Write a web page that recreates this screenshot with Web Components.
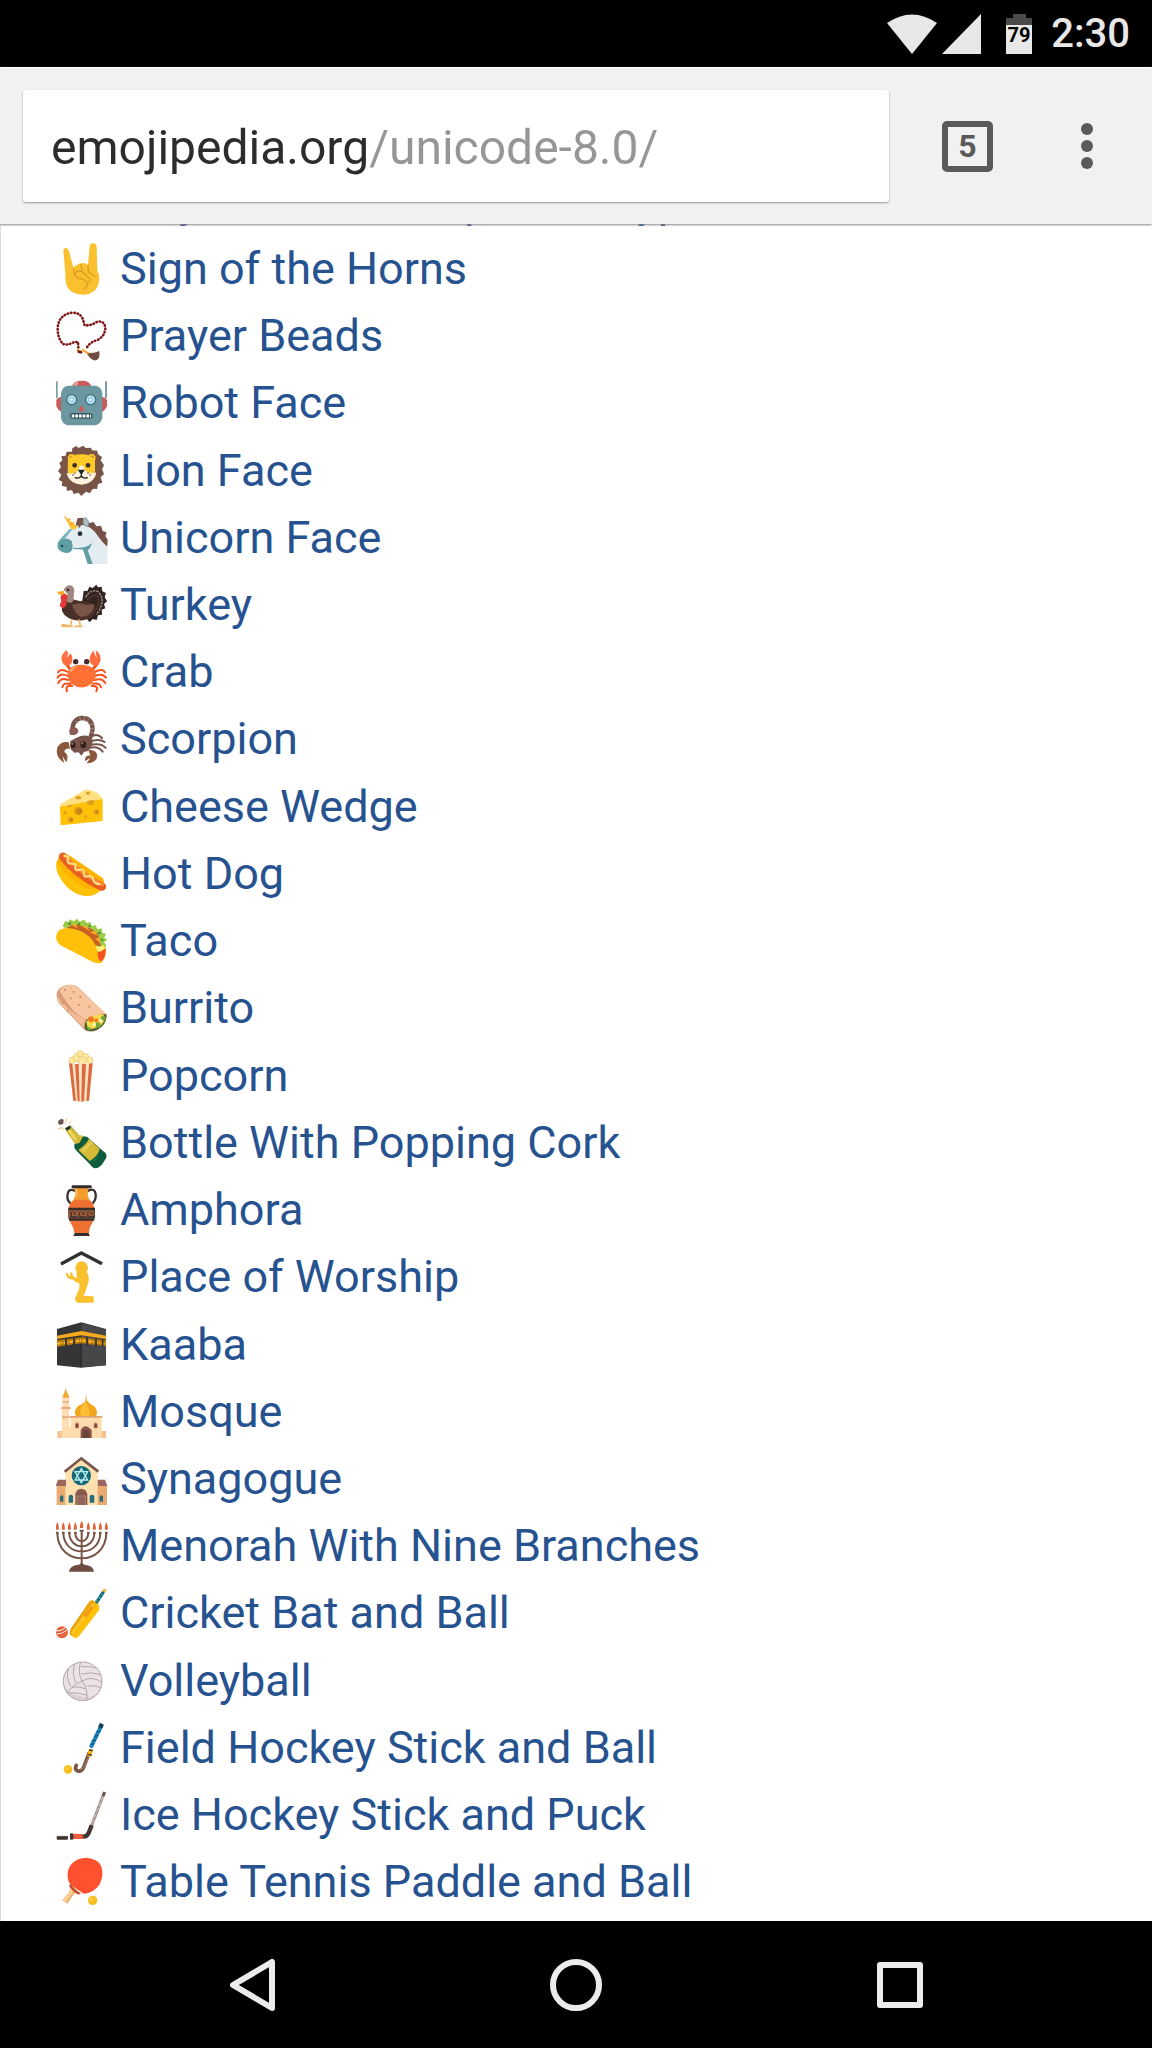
<!DOCTYPE html>
<html lang="en">
<head>
<meta charset="utf-8">
<meta name="viewport" content="width=device-width, initial-scale=1">
<title>Unicode 8.0</title>
<style>
  body {
    margin: 0;
    background: #fff;
    font-family: Roboto, "Noto Sans", sans-serif;
  }
</style>
</head>
<body>
<phone-screen>
  <status-bar slot="status" battery="79">2:30</status-bar>
  <browser-toolbar slot="toolbar" url="emojipedia.org/unicode-8.0/" tabs="5"></browser-toolbar>
  <emoji-list>
    <emoji-row icon="swatch">Emoji Modifier Fitzpatrick Type-6</emoji-row>
    <emoji-row icon="horns">Sign of the Horns</emoji-row>
    <emoji-row icon="beads">Prayer Beads</emoji-row>
    <emoji-row icon="robot">Robot Face</emoji-row>
    <emoji-row icon="lion">Lion Face</emoji-row>
    <emoji-row icon="unicorn">Unicorn Face</emoji-row>
    <emoji-row icon="turkey">Turkey</emoji-row>
    <emoji-row icon="crab">Crab</emoji-row>
    <emoji-row icon="scorpion">Scorpion</emoji-row>
    <emoji-row icon="cheese">Cheese Wedge</emoji-row>
    <emoji-row icon="hotdog">Hot Dog</emoji-row>
    <emoji-row icon="taco">Taco</emoji-row>
    <emoji-row icon="burrito">Burrito</emoji-row>
    <emoji-row icon="popcorn">Popcorn</emoji-row>
    <emoji-row icon="bottle">Bottle With Popping Cork</emoji-row>
    <emoji-row icon="amphora">Amphora</emoji-row>
    <emoji-row icon="worship">Place of Worship</emoji-row>
    <emoji-row icon="kaaba">Kaaba</emoji-row>
    <emoji-row icon="mosque">Mosque</emoji-row>
    <emoji-row icon="synagogue">Synagogue</emoji-row>
    <emoji-row icon="menorah">Menorah With Nine Branches</emoji-row>
    <emoji-row icon="cricket">Cricket Bat and Ball</emoji-row>
    <emoji-row icon="volleyball">Volleyball</emoji-row>
    <emoji-row icon="fieldhockey">Field Hockey Stick and Ball</emoji-row>
    <emoji-row icon="icehockey">Ice Hockey Stick and Puck</emoji-row>
    <emoji-row icon="tabletennis">Table Tennis Paddle and Ball</emoji-row>
  </emoji-list>
  <nav-bar slot="nav"></nav-bar>
</phone-screen>

<script>
(function() {
  // each icon: [top of its 156 unit square, markup, width in px if it is not 52]
  const ICONS = {
    swatch: [0, `<path fill="#5c4037" d="M100 50h56v56h-56z"/>`, 23],
    horns: [37, `
      <path fill="#fbc02d" d="M72 59Q72 51 80 52Q87 53 89 61L102 112Q107 101 115 103Q118 96 127 98Q138 94 146 104L151 47Q152 38 162 38Q172 39 172 49L174 121Q182 132 179 151Q174 191 130 192Q94 191 82 165Q77 151 78 130Z"/>
      <path fill="none" stroke="#d99a24" stroke-width="3.5" stroke-linecap="round" d="M102 112L105 132M124 102L128 120M146 104L147 124L166 136M104 130Q115 115 130 124L152 145Q155 153 146 157M108 132Q110 143 122 144Q138 146 143 158Q146 169 134 175"/>`],
    beads: [238, `
      <path fill="none" stroke="#e9a09a" stroke-width="3" d="M117 350L116 334L104 334Q86 345 71 340Q54 322 55 290Q60 250 99 246Q122 246 130 264L136 284Q155 286 174 273Q194 269 198 290Q198 315 175 328Q150 334 140 355"/>
      <path fill="none" stroke="#7b1714" stroke-width="8" stroke-linecap="round" stroke-dasharray="1 9" d="M117 350L116 334L104 334Q86 345 71 340Q54 322 55 290Q60 250 99 246Q122 246 130 264L136 284Q155 286 174 273Q194 269 198 290Q198 315 175 328Q150 334 140 355"/>
      <path fill="#6d4c41" d="M140 365Q160 370 180 361Q184 391 164 389Q151 385 140 365Z"/>
      <path stroke="#f9a825" stroke-width="6" d="M112 357L126 363M128 357L148 369"/>
      <path stroke="#7b1714" stroke-width="8" stroke-linecap="round" d="M118 363L125 365"/>`],
    robot: [440, `
      <path fill="#78a0a8" d="M49 453h6v50h-6zM197 453h6v50h-6z"/>
      <path fill="#c95b5b" d="M51 508Q60 496 72 502V546Q60 546 51 528ZM203 508Q194 496 182 502V546Q194 546 203 528ZM98 468Q101 451 127 451Q152 451 156 468Z"/>
      <path fill="#ef9a9a" d="M104 458Q110 452 117 453L114 466H102Z"/>
      <path fill="#6b98a0" d="M84 466H170Q187 470 189 490V563Q184 581 169 585H84Q69 580 65 563V490Q68 470 84 466Z"/>
      <circle cx="97" cy="508" r="17" fill="#456f78"/><circle cx="154" cy="508" r="17" fill="#456f78"/>
      <circle cx="97" cy="508" r="13" fill="#b3e5fc"/><circle cx="154" cy="508" r="13" fill="#b3e5fc"/>
      <circle cx="97" cy="508" r="6" fill="#e9faff" stroke="#63a2b5" stroke-width="2"/><circle cx="154" cy="508" r="6" fill="#e9faff" stroke="#63a2b5" stroke-width="2"/>
      <path fill="#d65656" d="M126 524L134 540Q126 547 118 540Z"/>
      <rect x="91" y="548" width="69" height="17" rx="8" fill="#37565e"/>
      <path stroke="#fff" stroke-width="9" stroke-dasharray="8 3" d="M97 557h58"/>`],
    lion: [41, `
      <path fill="#795548" d="M99 51L111 44L117 50L132 43L139 50L155 49L158 57L174 58L176 69L188 77L184 87L194 102L188 113L194 128L184 138L189 154L176 158L173 173L161 172L151 186L140 181L126 194L117 184L103 188L98 177L82 178L82 167L67 163L69 151L58 145L66 131L56 119L65 107L60 95L69 87L66 75L79 73L82 61L98 61Z"/>
      <circle cx="97" cy="80" r="12" fill="#fbc02d"/><circle cx="157" cy="80" r="12" fill="#fbc02d"/>
      <circle cx="96" cy="81" r="6" fill="#5d4037"/><circle cx="157" cy="81" r="6" fill="#5d4037"/>
      <path fill="#ffca28" d="M86 83Q98 69 126 69Q154 69 167 83V119Q165 133 154 144L127 161L99 144Q87 133 85 119Z"/>
      <path fill="#fff3e0" d="M82 124Q100 132 115 118L122 103H131L139 118Q153 131 170 123Q171 139 152 153Q127 166 101 153Q83 139 82 124Z"/>
      <circle cx="106" cy="102" r="7" fill="#3e2f2b"/><circle cx="146" cy="102" r="7" fill="#3e2f2b"/>
      <path fill="#222" d="M115 115H137L128 128V138H124V128Z"/>
      <path fill="none" stroke="#222" stroke-width="4" stroke-linecap="round" d="M108 139Q118 143 126 135Q134 143 144 139"/>
      <path fill="#795548" d="M105 123h4v4h-4zM99 129h4v4h-4zM144 123h4v4h-4zM150 129h4v4h-4z"/>`],
    unicorn: [243, `
      <path fill="#795048" d="M115 262L130 260L139 272L150 276L163 273L171 286L185 284L190 300L202 304L198 315L205 326L204 345L190 348L177 330L146 290L116 287L104 298Z"/>
      <path fill="#e3edf1" d="M96 291Q113 279 136 283Q162 291 176 316Q190 336 204 347V399H155Q153 374 134 356Q110 352 96 361L62 331Z"/>
      <path fill="#5f9fa4" d="M62 327Q81 317 97 330Q104 352 94 362Q76 372 58 356Q52 345 56 334ZM102 350Q139 354 158 336Q154 352 145 358L160 399H145L131 356Q116 353 102 354Z"/>
      <path fill="#78b3b9" d="M59 328L91 294L99 294L75 325Z"/>
      <path fill="#fbc02d" d="M72 251L114 287Q106 301 94 292Z"/>
      <path stroke="#e69b18" stroke-width="3" d="M83 269L94 263M90 282L105 273"/>
      <path fill="#b0bec5" stroke="#78909c" stroke-width="3" d="M132 280Q129 264 137 260Q153 269 146 287Z"/>
      <path fill="#795548" d="M112 267L123 260L129 278L119 292Z"/>
      <circle cx="122" cy="308" r="7" fill="#263238"/>
      <circle cx="68" cy="345" r="4" fill="#244e56"/>`],
    turkey: [445, `
      <path fill="#33231f" d="M130 503L133 481L145 480L150 468L160 472L171 462L176 470L187 468L189 482L200 487L196 499L203 512L194 520L198 533L187 537L188 552L176 554L172 568L160 565L151 575L140 562L119 556Z"/>
      <path fill="none" stroke="#a89a94" stroke-width="4" stroke-dasharray="7 3" d="M139 500Q151 476 175 482Q203 507 171 552"/>
      <path fill="none" stroke="#5d4037" stroke-width="5" stroke-dasharray="5 3" d="M144 508Q162 489 175 498Q184 517 166 542"/>
      <path fill="#493029" d="M82 499Q97 507 121 511Q158 511 170 532Q168 568 119 570Q79 567 68 541Q66 527 77 511Z"/>
      <path fill="#795548" d="M98 523Q119 514 139 522L165 521Q160 559 124 558Q106 550 98 523Z"/>
      <path fill="#a1887f" d="M73 477Q82 459 98 465Q108 473 104 487L102 510Q94 523 80 510L85 491Z"/>
      <path fill="#e53935" d="M67 491Q79 484 85 496Q84 503 81 511Q85 525 72 532Q59 530 62 519Q69 511 63 502Z"/>
      <path fill="#f9a825" d="M53 483L74 481L76 491L59 492Z"/>
      <circle cx="86" cy="478" r="4" fill="#3e2723"/>
      <path fill="none" stroke="#efb76b" stroke-width="5" stroke-linecap="round" d="M97 568L94 585M119 568L123 585M68 587H99M107 587H128M68 582L88 585"/>`],
    crab: [31, `
      <path fill="none" stroke="#f4511e" stroke-width="6" stroke-linecap="round" d="M86 109Q63 96 56 110M86 121Q63 110 55 126M86 133Q65 124 57 142M94 144Q70 140 69 155M98 151Q76 148 83 167M166 109Q191 97 197 110M166 121Q189 111 200 126M166 133Q188 125 198 142M160 144Q182 140 185 155M157 151Q179 149 171 167"/>
      <path fill="none" stroke="#f4511e" stroke-width="9" d="M79 83L96 105M175 83L157 105"/>
      <path fill="#ff6e40" d="M80 44L87 51L82 67L94 53Q105 72 94 86Q82 95 72 85Q62 70 70 56ZM162 45L172 68L169 44Q182 51 184 69Q183 86 171 90Q158 91 151 78Q148 62 162 45Z"/>
      <path fill="#ff7034" d="M88 104Q94 89 126 87Q158 89 167 104Q177 123 156 145Q126 166 97 145Q79 126 88 104Z"/>
      <path fill="#ffab75" d="M91 103Q97 92 113 93Q98 101 94 112Z"/>
      <circle cx="109" cy="78" r="8" fill="#3e2d2a"/><circle cx="142" cy="78" r="8" fill="#3e2d2a"/>`],
    scorpion: [233, `
      <path fill="none" stroke="#76544b" stroke-width="13" stroke-linecap="round" d="M99 284Q100 252 126 248Q158 247 160 280Q157 303 147 314"/>
      <path fill="none" stroke="#bfa59b" stroke-width="2" d="M107 257L120 263M120 244L125 257M136 243L132 257M150 250L141 261M165 266L147 268M166 279L151 280M164 292L148 291M159 305L144 303"/>
      <path fill="#8d5b51" d="M92 298Q85 280 99 276Q116 274 117 289Q110 303 92 298Z"/>
      <path fill="none" stroke="#76544b" stroke-width="6" stroke-linecap="round" d="M148 310Q171 289 188 308M148 320Q179 308 196 320M149 329Q187 321 199 338M149 338Q176 331 190 349"/>
      <path fill="#76544b" d="M93 317Q112 306 124 302Q151 296 160 315Q159 338 146 347L134 350L126 361L118 351L105 352L94 342Z"/>
      <path fill="#8b563b" d="M88 321Q67 316 55 334Q48 354 59 369Q66 377 75 383L69 362L81 381Q90 358 75 350Q76 337 92 340ZM147 344Q172 341 174 362Q172 383 142 384L153 368L137 377Q135 361 153 360Z"/>
      <ellipse cx="101" cy="329" rx="8" ry="10" fill="#38211d"/><ellipse cx="132" cy="328" rx="9" ry="10" fill="#38211d"/>
      <circle cx="99" cy="325" r="3" fill="#a1887f"/><circle cx="129" cy="324" r="3" fill="#a1887f"/>`],
    cheese: [434, `
      <path fill="#ffe082" d="M63 504L139 459Q180 464 190 490L63 513Z"/>
      <path fill="#ffc107" d="M62 511L190 488V554L64 567Z"/>
      <g fill="#dea022"><ellipse cx="117" cy="484" rx="9" ry="5"/><ellipse cx="146" cy="471" rx="7" ry="4"/><path d="M85 507L98 505Q96 514 88 513ZM141 498Q154 487 166 493Q164 507 151 507Q143 505 141 498Z"/><circle cx="117" cy="524" r="13"/><circle cx="171" cy="527" r="8"/><circle cx="139" cy="541" r="5"/><circle cx="94" cy="550" r="8"/><circle cx="77" cy="529" r="5"/></g>
      <g fill="#c98512"><circle cx="120" cy="525" r="9"/><circle cx="173" cy="528" r="5"/><circle cx="96" cy="551" r="5"/></g>`],
    hotdog: [21, `
      <path fill="#ffb300" d="M61 43Q77 32 94 46L190 111Q202 130 183 148Q165 169 133 164Q82 155 54 92Q49 73 53 61Z"/>
      <path fill="#ffc107" d="M52 62Q76 105 121 132Q154 150 184 145Q169 167 139 163Q84 156 55 97Q49 80 52 62Z"/>
      <path fill="none" stroke="#e95f22" stroke-width="25" stroke-linecap="round" d="M71 47Q112 101 188 137"/>
      <path fill="none" stroke="#ff8a3c" stroke-width="9" stroke-linecap="round" d="M76 44Q124 98 190 131"/>
      <path fill="none" stroke="#ffe082" stroke-width="6" stroke-linecap="round" stroke-linejoin="round" d="M75 44Q93 45 85 57Q82 71 101 68Q114 67 107 81Q108 91 121 86Q138 84 133 99Q134 111 149 105Q164 107 161 116Q165 129 181 130"/>`],
    taco: [223, `
      <path fill="#9ccc47" d="M70 257L77 241L88 244L91 236L104 242L112 234L121 243L134 237L143 247L153 244L157 257L169 253L174 266L187 263L189 276L200 279L195 291L204 297L194 305L201 313L192 324L168 332Z"/>
      <g fill="#4f8f28"><circle cx="91" cy="249" r="4"/><circle cx="119" cy="250" r="4"/><circle cx="151" cy="256" r="4"/><circle cx="180" cy="277" r="4"/><circle cx="188" cy="298" r="4"/></g>
      <path fill="#c76024" d="M83 261Q103 247 126 256Q160 260 176 281L185 318L160 311Q136 277 83 261Z"/>
      <path fill="#ffa726" d="M98 254L109 248L115 263ZM129 257L143 256L151 272ZM151 275L166 270L175 285ZM167 294L180 291L184 308Z"/>
      <path fill="#efa91c" d="M173 324L199 317Q204 349 187 364L164 365Z"/>
      <path fill="#f4511e" d="M175 329L198 324Q200 347 188 360L175 362Z"/>
      <path fill="#fff176" d="M168 316L180 318L192 314L198 323L183 333L170 332Z"/>
      <path fill="#ffbf0a" d="M50 288Q53 263 81 262Q123 263 151 289Q173 310 174 342Q177 361 190 364Q180 372 159 363L69 317Q51 307 50 288Z"/>`],
    burrito: [424, `
      <path fill="#d99b78" d="M52 468Q50 448 67 439Q91 427 113 437L203 523Q201 552 174 568Q153 577 136 568L58 487Z"/>
      <path fill="#f7c6a1" d="M60 449Q76 431 99 433Q111 434 119 442L199 519Q172 520 144 535Q124 529 109 517Q85 493 60 449Z"/>
      <path fill="#f4bc94" d="M54 468Q74 494 106 519Q121 529 138 533L135 563L60 487Q50 478 54 468Z"/>
      <path fill="#526535" d="M136 549Q146 526 174 525L201 520Q204 552 174 567Q148 577 136 565Z"/>
      <path fill="#f4dd4b" d="M141 543Q162 517 192 522Q203 534 187 552Q167 566 146 565Z"/>
      <g fill="#74a833"><circle cx="176" cy="553" r="8"/><circle cx="191" cy="533" r="7"/><circle cx="149" cy="564" r="5"/></g>
      <g fill="#ef7b22"><circle cx="155" cy="536" r="9"/><circle cx="171" cy="539" r="6"/></g>
      <g fill="#fff9c4"><circle cx="165" cy="552" r="5"/><circle cx="184" cy="540" r="5"/></g>
      <g fill="#c88a66"><circle cx="77" cy="448" r="3"/><circle cx="103" cy="454" r="3"/><circle cx="94" cy="473" r="3"/><circle cx="123" cy="469" r="3"/><circle cx="119" cy="492" r="3"/><circle cx="150" cy="498" r="3"/><circle cx="96" cy="442" r="2"/><circle cx="85" cy="511" r="3"/><circle cx="70" cy="486" r="3"/></g>`],
    popcorn: [11, `
      <g fill="#ffe9a0" stroke="#dfc16a" stroke-width="2"><circle cx="99" cy="42" r="10"/><circle cx="113" cy="34" r="12"/><circle cx="123" cy="23" r="10"/><circle cx="137" cy="32" r="11"/><circle cx="151" cy="42" r="10"/><circle cx="129" cy="43" r="12"/></g>
      <path fill="#ffe4c4" d="M89 50L106 54L123 51L143 54L160 50L149 163L125 166L102 163Z"/>
      <path fill="#dc6a3e" d="M89 50L99 53L110 164L102 163ZM107 54L118 52L121 165L115 165ZM128 52L140 54L134 165L126 166ZM149 53L160 50L149 163L141 164Z"/>`],
    bottle: [212, `
      <path fill="#6d5450" d="M57 224L65 217L73 220L72 232L62 236L56 231Z"/>
      <path stroke="#f5c05b" stroke-width="3" d="M82 216L79 227M88 231L95 225M57 247L67 244M70 251L76 244"/>
      <path stroke="#b0bec5" stroke-width="2" d="M78 235L74 228M63 249L71 240"/>
      <path fill="#0e5c3b" d="M79 248L93 237L119 268L143 271L192 315Q204 322 201 334L189 353Q178 368 164 365Q157 362 151 353L110 312Q101 301 107 291Z"/>
      <path fill="#d5b938" d="M80 251L94 240L119 266L132 269L120 290L108 293L82 258ZM117 311Q141 294 149 277L181 307Q178 328 151 344Z"/>
      <path fill="#ead55c" d="M85 253L91 248L113 276L108 286Z"/>
      <path fill="#20352a" d="M77 246L90 238L95 245L83 254Z"/>
      <path fill="#e3cb56" d="M127 312L154 285L159 290L134 319Z"/>
      <path fill="#146b46" d="M154 345L178 326L183 328L162 350Z"/>`],
    amphora: [414, `
      <path fill="none" stroke="#373331" stroke-width="7" stroke-linecap="round" d="M106 434Q88 426 85 444Q81 461 94 473M147 434Q166 425 169 444Q171 461 159 473"/>
      <path fill="#f59c2e" d="M105 425H147L145 448Q148 461 162 474L90 474Q105 462 108 448Z"/>
      <path fill="#ef7132" d="M106 461H148Q168 473 166 500Q163 528 152 543L148 565H106L101 543Q87 523 86 499Q86 472 106 461Z"/>
      <rect x="97" y="418" width="60" height="9" rx="3" fill="#332d2b"/>
      <path fill="#332d2b" d="M87 485H167V492H87ZM88 517H165V524H89ZM107 561H147L152 571H101Z"/>
      <path fill="#4b3832" d="M87 491H167V517H87Z"/>
      <path fill="none" stroke="#c26b3a" stroke-width="3" d="M90 514V495H112V508H99V501H106M116 514V495H137V508H124V501H131M141 514V495H162V508H149V501H156"/>
      <path stroke="#ffbd62" stroke-width="6" d="M111 428V450"/>`],
    worship: [16, `
      <path fill="none" stroke="#303030" stroke-width="10" stroke-linejoin="round" d="M65 55L126 22L188 54"/>
      <circle cx="127" cy="66" r="19" fill="#fbc02d"/>
      <path fill="#fbc02d" d="M112 80Q125 70 143 80Q151 91 147 110L136 144Q131 149 134 151L162 152Q165 157 162 171H114Q104 166 109 153L120 128V113Q106 110 100 101Q85 103 80 89Q78 79 84 82L92 94L93 80Q100 79 101 90L112 99Z"/>`],
    kaaba: [217, `
      <path fill="#343536" d="M53 247L126 227L200 247V356L125 363L53 356Z"/>
      <path fill="#454748" d="M126 229L200 249V356L126 362Z"/>
      <path fill="#f6a91b" d="M53 267L126 253L200 267V277L126 266L53 277Z"/>
      <path fill="#b8790a" d="M53 281L126 272L200 281V299L126 290L53 300Z"/>
      <path fill="none" stroke="#ffc232" stroke-width="6" stroke-dasharray="9 3 3 4" d="M54 291L126 281L199 291"/>
      <path stroke="#292b2d" stroke-width="5" d="M80 277V299M104 272V297M143 272V296M170 275V299M190 278V299"/>
      <path stroke="#242629" stroke-width="3" d="M126 292V361"/>`],
    mosque: [419, `
      <path fill="#d6b383" d="M79 424L82 435L90 454H69L76 435Z"/>
      <path fill="#f3a82e" d="M79 431L91 454H69Z"/>
      <path fill="#ffdcb4" d="M70 454H89V484H93V492H89V552H68V492H65V484H70Z"/>
      <path fill="#e8aa7b" d="M66 481H93V488H66ZM69 465H89V469H69ZM68 510H90V515H68Z"/>
      <path fill="#f4c390" d="M54 554H75V576H54ZM179 554H200V576H179Z"/>
      <path fill="#ffdcae" d="M94 511H187V576H68V542H94Z"/>
      <path fill="#f1a51c" d="M140 443L143 463Q150 472 164 479Q178 493 170 510H110Q101 493 117 478Q136 471 138 463Z"/>
      <path fill="#ffbe38" d="M139 464Q143 477 150 491L150 509H126Q117 493 130 478Z"/>
      <path fill="#e1a16f" d="M91 509H189V514H91Z"/>
      <path fill="#8b554b" d="M124 576V551Q137 528 157 551V576Z"/>
      <path fill="#6a453e" d="M130 576V555Q139 544 150 555V576Z"/>
      <path fill="#be7965" d="M107 546V533Q113 523 119 533V546ZM163 546V533Q169 523 175 533V546Z"/>
      <path fill="#704139" d="M110 543V534H116V543ZM166 543V534H172V543Z"/>`],
    synagogue: [20, `
      <path fill="#ebaa70" d="M52 119H203V177H52Z"/>
      <path fill="#ffe0ae" d="M126 35L175 74V177H78V74Z"/>
      <path fill="none" stroke="#79554b" stroke-width="8" d="M76 76L126 36L177 76"/>
      <path fill="#9b665b" d="M56 100H80V119H49ZM175 100H197L204 119H175Z"/>
      <circle cx="126" cy="88" r="29" fill="#176878"/>
      <path fill="none" stroke="#b7eeee" stroke-width="4" d="M126 67L145 101H107ZM126 109L107 76H145Z"/>
      <path fill="#87594d" d="M108 177V143Q112 128 126 127Q140 128 144 143V177Z"/>
      <path fill="#c38b79" d="M112 177V148H140V177Z"/>
      <path fill="#91655c" d="M114 177V150H138V177Z"/>
      <path fill="#296d7a" d="M62 166V150Q67 144 72 150V166ZM88 169V149Q95 141 101 149V169ZM151 169V149Q158 141 165 149V169ZM181 166V150Q186 144 191 150V166Z"/>`],
    menorah: [222, `
      <path fill="none" stroke="#795548" stroke-width="6" d="M54 261C55 362 199 362 201 261M72 261C73 335 182 335 183 261M90 261C91 314 164 314 165 261M108 261C108 294 146 294 147 261M127 255V364"/>
      <path stroke="#795548" stroke-width="6" d="M50 260H58M68 260H76M86 260H94M104 260H112M121 254H133M143 260H151M161 260H169M179 260H187M197 260H205"/>
      <path fill="#6d4c41" d="M89 377Q92 357 119 356L127 350L135 356Q162 358 164 377Z"/>
      <path fill="#df6338" d="M54 229Q60 240 58 251H50Q48 240 54 229ZM72 229Q78 240 76 251H68Q66 240 72 229ZM90 229Q96 240 94 251H86Q84 240 90 229ZM108 229Q114 240 112 251H104Q102 240 108 229ZM127 224Q134 236 131 246H122Q120 235 127 224ZM147 229Q153 240 151 251H143Q141 240 147 229ZM165 229Q171 240 169 251H161Q159 240 165 229ZM183 229Q189 240 187 251H179Q177 240 183 229ZM201 229Q207 240 205 251H197Q195 240 201 229Z"/>`],
    cricket: [424, `
      <path stroke="#166779" stroke-width="10" d="M169 474L193 438"/>
      <path stroke="#52b5c0" stroke-width="3" d="M169 464L178 469M176 454L185 459M184 444L192 449"/>
      <path stroke="#f3b831" stroke-width="10" d="M193 438L198 431"/>
      <path fill="#ffc107" d="M151 467L160 463L179 479L180 492L117 574Q110 579 102 575L91 565Q89 558 96 547Z"/>
      <path fill="#e9a613" d="M151 467L160 463L170 475L98 571L91 565Q89 558 96 547Z"/>
      <path fill="#ffc928" d="M160 472L167 478L100 567L95 562Z"/>
      <path fill="#f49b15" d="M154 483L166 482L143 515Q135 513 133 508Z"/>
      <circle cx="68" cy="560" r="18" fill="#e9653f"/>
      <path fill="none" stroke="#fff0e5" stroke-width="3" d="M50 556Q65 558 80 545M52 565Q70 565 84 552"/>
      <path fill="none" stroke="#963f31" stroke-width="2" stroke-dasharray="3 3" d="M51 561Q67 563 82 549"/>`],
    volleyball: [25, `
      <circle cx="130" cy="104" r="59" fill="#eae2e4"/>
      <path fill="#dcd2d5" d="M73 119Q86 161 130 163Q171 159 186 119Q179 150 139 151Q102 153 73 119Z"/>
      <g fill="none" stroke="#b3a8ab" stroke-width="3"><circle cx="130" cy="104" r="58"/><path d="M128 103Q114 76 124 46M128 103Q159 86 188 107M128 103Q97 117 83 139M110 110Q96 77 107 50M94 119Q78 89 88 64M124 60Q150 58 172 64M126 82Q157 74 183 84M143 118Q165 114 186 123M128 103Q147 128 142 161M84 139Q112 136 142 145M98 122Q120 118 138 126"/></g>`],
    fieldhockey: [227, `
      <path stroke="#1686b8" stroke-width="12" d="M154 304L186 238"/>
      <path stroke="#0d4f80" stroke-width="3" d="M152 294L165 293M157 283L170 282M164 270L176 268M171 256L184 254"/>
      <path stroke="#183f58" stroke-width="13" d="M182 244L188 232"/>
      <path fill="none" stroke="#795548" stroke-width="11" stroke-linecap="round" d="M149 321L133 363Q127 377 115 374Q105 369 111 357"/>
      <path fill="none" stroke="#a77a5f" stroke-width="4" d="M151 326L138 356Q131 369 121 369"/>
      <path stroke="#ffb300" stroke-width="12" d="M148 330L156 309"/>
      <path stroke="#3e3a35" stroke-width="4" d="M144 324L158 326M149 311L161 313"/>
      <circle cx="86" cy="369" r="13" fill="#f7bc1f"/>
      <circle cx="83" cy="366" r="6" fill="#ffce37"/>`],
    icehockey: [428, `
      <path stroke="#a49796" stroke-width="9" d="M156 540L194 441"/>
      <path stroke="#d8cccc" stroke-width="3" d="M159 531L190 452"/>
      <path stroke="#6b5757" stroke-width="9" d="M191 449L196 437"/>
      <path stroke="#876766" stroke-width="2" d="M161 520L169 511M167 504L176 494M174 487L181 479M180 470L187 462"/>
      <path fill="none" stroke="#443633" stroke-width="13" stroke-linejoin="round" d="M157 537L148 560Q142 572 132 571H92"/>
      <path fill="#ef5c3e" d="M102 562L128 563L133 578H103Z"/>
      <path fill="#443633" d="M92 561H101V580H92Z"/>
      <rect x="52" y="569" width="34" height="11" rx="3" fill="#3d3431"/>
      <path stroke="#756964" stroke-width="2" d="M54 570H84"/>`],
    tabletennis: [630, `
      <path fill="#eab476" d="M96 717L115 735L101 748L84 773L69 762L87 742Z"/>
      <path fill="#ffd395" d="M94 723L104 733L79 768L72 762L89 742Z"/>
      <path fill="#ff5130" d="M94 657Q111 635 143 635Q174 638 185 659Q196 686 180 716Q163 741 133 743L97 719Q84 708 85 688Q84 671 94 657Z"/>
      <path fill="#bb4d2d" d="M94 714Q101 729 125 742L117 746Q98 735 89 719Z"/>
      <circle cx="160" cy="763" r="14" fill="#f7bd20"/><circle cx="156" cy="760" r="7" fill="#ffce3c"/>`]
  };

  function attach(el, html) {
    const root = el.attachShadow({ mode: 'open' });
    const tmpl = document.createElement('template');
    tmpl.innerHTML = html;
    root.appendChild(tmpl.content.cloneNode(true));
    return root;
  }

  class PhoneScreen extends HTMLElement {
    constructor() {
      super();
      attach(this, `
        <style>
          :host {
            display: flex;
            flex-direction: column;
            min-height: 100vh;
          }
          main {
            flex: 1;
            display: flex;
            flex-direction: column;
            border-left: 1px solid #dcdcdc;
          }
        </style>
        <slot name="status"></slot>
        <slot name="toolbar"></slot>
        <main><slot></slot></main>
        <slot name="nav"></slot>
      `);
    }
  }

  class StatusBar extends HTMLElement {
    connectedCallback() {
      attach(this, `
        <style>
          :host {
            display: flex;
            align-items: center;
            justify-content: flex-end;
            height: 67px;
            padding-right: 22px;
            background: #000;
            color: #e8e8e8;
            font-size: 40px;
            font-weight: 500;
            line-height: 48px;
          }
          svg {
            display: block;
            fill: #e8e8e8;
          }
          .signal { margin-left: 5px; }
          .battery { margin: 0 19px 0 24px; }
          text {
            fill: #000;
            font-size: 20px;
            font-weight: 700;
          }
        </style>
        <svg width="50" height="40" viewBox="0 0 50 40"><path d="M0 9Q25 -8 50 9L25 40Z"/></svg>
        <svg class="signal" width="40" height="40" viewBox="0 0 40 40"><path d="M39 0V40H0Z"/></svg>
        <svg class="battery" width="26" height="40" viewBox="0 0 26 40">
          <path fill="#4a4a4a" d="M7 0H20V4H26V11H0V4H7Z"/>
          <path d="M0 11H26V40H0Z"/>
          <text x="13" y="28" text-anchor="middle">${this.getAttribute('battery')}</text>
        </svg>
        <slot></slot>
      `);
    }
  }

  class BrowserToolbar extends HTMLElement {
    connectedCallback() {
      attach(this, `
        <style>
          :host {
            position: relative;
            z-index: 1;
            display: flex;
            align-items: center;
            box-sizing: border-box;
            height: 157px;
            padding: 0 33px 0 23px;
            background: #f1f1f1;
            border-top: 1px solid #fff;
            box-shadow: 0 1px 2px #888;
          }
          .box {
            flex: 1;
            display: flex;
            background: #fff;
            border-radius: 3px;
            box-shadow: 0 1px 2px #999;
          }
          input {
            flex: 1;
            min-width: 0;
            height: 112px;
            box-sizing: border-box;
            border: 0;
            padding: 2px 28px 0;
            outline: 0;
            font-family: inherit;
            font-size: 48px;
            color: #2c2c2c;
            -webkit-text-fill-color: transparent;
            background: linear-gradient(90deg, #2c2c2c 347px, #969696 347px);
            -webkit-background-clip: text;
            background-clip: text;
          }
          button {
            display: grid;
            place-items: center;
            border: 0;
            padding: 0;
            background: none;
            color: #5a5a5a;
            font-family: inherit;
          }
          .tabs {
            box-sizing: border-box;
            width: 51px;
            height: 51px;
            margin: 0 62px 0 53px;
            border: 6px solid #5a5a5a;
            border-radius: 5px;
            font-size: 32px;
            font-weight: 700;
            line-height: 39px;
          }
          .menu {
            width: 64px;
            height: 64px;
          }
          .menu svg { fill: #5a5a5a; }
        </style>
        <div class="box"><input type="text" aria-label="Address" value="${this.getAttribute('url')}"></div>
        <button class="tabs" aria-label="Tabs">${this.getAttribute('tabs')}</button>
        <button class="menu" aria-label="Menu">
          <svg width="12" height="46" viewBox="0 0 12 46"><circle cx="6" cy="6" r="6"/><circle cx="6" cy="23" r="6"/><circle cx="6" cy="40" r="6"/></svg>
        </button>
      `);
    }
  }

  class EmojiList extends HTMLElement {
    constructor() {
      super();
      attach(this, `
        <style>
          /* scrolled up so that the first row is under the toolbar */
          :host {
            flex: 1;
            display: grid;
            grid-auto-rows: minmax(67px, 1fr);
            margin-top: -56px;
            padding: 0 55px 5px;
          }
        </style>
        <slot></slot>
      `);
    }

    connectedCallback() {
      this.setAttribute('role', 'list');
    }
  }

  class EmojiRow extends HTMLElement {
    connectedCallback() {
      const [top, art, width = 52] = ICONS[this.getAttribute('icon')];
      this.setAttribute('role', 'listitem');
      attach(this, `
        <style>
          :host {
            display: flex;
            align-items: center;
            font-size: 45px;
            line-height: 56px;
          }
          a {
            display: flex;
            align-items: center;
            gap: 12px;
            color: #26528f;
            text-decoration: none;
          }
          svg {
            flex: none;
            display: block;
          }
        </style>
        <a href="#${this.getAttribute('icon')}">
          <svg width="${width}" height="52" viewBox="50 ${top} 156 156" aria-hidden="true">${art}</svg>
          <span><slot></slot></span>
        </a>
      `);
    }
  }

  class NavBar extends HTMLElement {
    constructor() {
      super();
      attach(this, `
        <style>
          :host {
            display: grid;
            grid-template-columns: repeat(3, 1fr);
            height: 127px;
            padding: 0 90px;
            background: #000;
          }
          button {
            border: 0;
            padding: 0;
            background: none;
          }
          svg {
            display: block;
            margin: 0 auto;
            fill: none;
            stroke: #ececec;
            stroke-width: 6;
            stroke-linejoin: round;
          }
        </style>
        <button aria-label="Back"><svg width="52" height="52" viewBox="0 0 52 52"><path d="M46 3V49L7 26Z"/></svg></button>
        <button aria-label="Home"><svg width="52" height="52" viewBox="0 0 52 52"><circle cx="26" cy="26" r="23"/></svg></button>
        <button aria-label="Recent apps"><svg width="52" height="52" viewBox="0 0 52 52"><path d="M6 6H46V46H6Z"/></svg></button>
      `);
    }
  }

  customElements.define('phone-screen', PhoneScreen);
  customElements.define('status-bar', StatusBar);
  customElements.define('browser-toolbar', BrowserToolbar);
  customElements.define('emoji-list', EmojiList);
  customElements.define('emoji-row', EmojiRow);
  customElements.define('nav-bar', NavBar);
})();
</script>
</body>
</html>
